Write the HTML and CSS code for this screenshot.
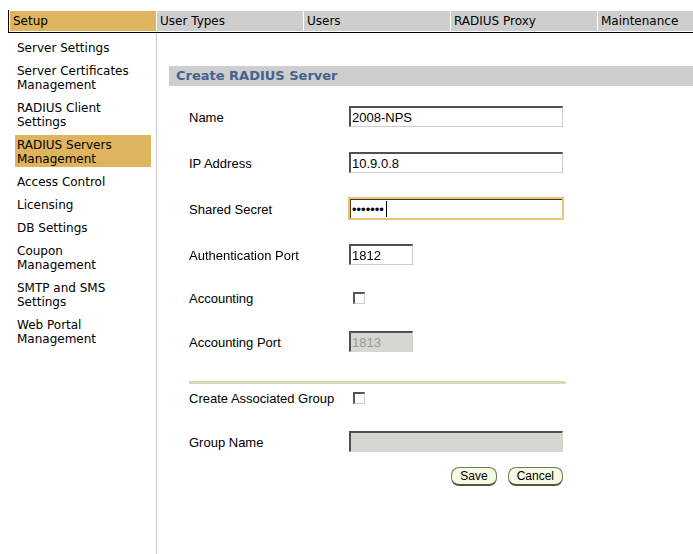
FILE: index.html
```html
<!DOCTYPE html>
<html lang="en">
    <head>
        <meta charset="UTF-8">
        <title>Create RADIUS Server</title>
        <link rel="stylesheet" href="styles.css">
    </head>
    <body>
        <nav class="tabs">
            <a class="tab current" href="#">Setup</a>
            <a class="tab" href="#">User Types</a>
            <a class="tab" href="#">Users</a>
            <a class="tab" href="#">RADIUS Proxy</a>
            <a class="tab" href="#">Maintenance</a>
        </nav>
        <div class="wrapper">
            <nav class="menu">
                <a href="#">Server Settings</a>
                <a href="#">Server Certificates Management</a>
                <a href="#">RADIUS Client Settings</a>
                <a class="current" href="#">RADIUS Servers Management</a>
                <a href="#">Access Control</a>
                <a href="#">Licensing</a>
                <a href="#">DB Settings</a>
                <a href="#">Coupon Management</a>
                <a href="#">SMTP and SMS Settings</a>
                <a href="#">Web Portal Management</a>
            </nav>
            <main class="content">
                <h1>Create RADIUS Server</h1>
                <form class="form">
                    <div class="fields">
                        <label for="name">Name</label>
                        <input type="text" id="name" value="2008-NPS">
                        <label for="ip">IP Address</label>
                        <input type="text" id="ip" value="10.9.0.8">
                        <label for="secret">Shared Secret</label>
                        <input type="password" id="secret" class="secret" value="secret1" autofocus>
                        <label for="authport">Authentication Port</label>
                        <input type="text" id="authport" class="port" value="1812">
                        <label for="acct">Accounting</label>
                        <input type="checkbox" id="acct">
                        <label for="acctport">Accounting Port</label>
                        <input type="text" id="acctport" class="port" value="1813" disabled>
                    </div>
                    <hr class="line">
                    <div class="fields">
                        <label for="creategroup">Create Associated Group</label>
                        <input type="checkbox" id="creategroup">
                        <label for="group">Group Name</label>
                        <input type="text" id="group" disabled>
                    </div>
                    <div class="buttons">
                        <button type="button">Save</button>
                        <button type="button">Cancel</button>
                    </div>
                </form>
            </main>
        </div>
    </body>
</html>
```
FILE: styles.css
```css
body {
    margin: 0;
    padding: 10px 0 0 8px;
    min-height: 100vh;
    box-sizing: border-box;
    display: flex;
    flex-direction: column;
    background: #fff;
    color: #000;
    font-family: "DejaVu Sans", Verdana, sans-serif;
    font-size: 12px;
}

a {
    color: #000;
    text-decoration: none;
}

/* top tabs */
.tabs {
    display: flex;
    border-left: 1px solid #000;
    border-bottom: 1px solid #000;
}

.tab {
    width: 147px;
    box-sizing: border-box;
    padding: 0 3px;
    line-height: 20px;
    border: solid #fff;
    border-width: 1px 0 1px 1px;
    background: #cecece;
}

.tab:last-child {
    flex: 1;
}

.tab.current {
    background: #deb45f;
}

/* left menu */
.wrapper {
    display: flex;
    flex: 1;
}

.menu {
    width: 136px;
    padding: 5px 5px 0 7px;
    border-right: 1px solid #c8c8c8;
}

.menu a {
    display: block;
    padding: 3px 8px 1px 2px;
    margin-bottom: 5px;
    line-height: 14px;
}

.menu a.current {
    background: #deb45f;
}

.content {
    flex: 1;
    padding: 33px 0 0 12px;
}

h1 {
    margin: 0;
    padding-left: 7px;
    background: #cecece;
    color: #44618f;
    font-size: 13px;
    line-height: 20px;
}

/* form */
.form {
    max-width: 377px;
    padding: 20px 0 0 20px;
    font-family: "Liberation Sans", Arial, sans-serif;
    font-size: 13px;
}

.fields {
    display: grid;
    grid-template-columns: 160px 214px;
    row-gap: 25px;
    align-items: center;
    line-height: 14px;
}

label {
    padding-top: 2px;
}

input {
    box-sizing: border-box;
    margin: 0;
    font: inherit;
}

input[type=text],
input[type=password] {
    width: 100%;
    height: 21px;
    padding: 0 1px;
    border: solid;
    border-width: 2px 1px 1px 2px;
    border-color: #505050 #ccc #ccc #505050;
    background: #fff;
    color: #000;
}

input[type=text].port {
    width: 64px;
}

input[type=text]:disabled {
    background: #d6d7d0;
    border-right-color: #d6d7d0;
    border-bottom-color: #d6d7d0;
    color: #999;
}

/* active field, with a steady caret */
input[type=password].secret {
    outline: 2px solid #e6c677;
    outline-offset: -1px;
    border-color: #503a10 #fff #fff #503a10;
    background: linear-gradient(#000, #000) 35px 1px / 1px 16px no-repeat #fff;
    caret-color: transparent;
}

input[type=checkbox] {
    appearance: none;
    width: 12px;
    height: 12px;
    margin-left: 4px;
    border: solid;
    border-width: 2px 1px 1px 2px;
    border-color: #555 #ccc #ccc #555;
}

.line {
    height: 3px;
    margin: 29px 0 6px;
    border: 0;
    background: #d5dcb5;
}

.buttons {
    display: flex;
    justify-content: flex-end;
    gap: 11px;
    padding: 15px 3px 0 0;
}

button {
    height: 19px;
    padding: 0 8px;
    border: 1px solid #6d7b56;
    border-bottom: 2px solid #4d5b3a;
    border-radius: 8px;
    background: #f6f9e4;
    color: #000;
    font: 12px/16px "Liberation Sans", Arial, sans-serif;
}
```
